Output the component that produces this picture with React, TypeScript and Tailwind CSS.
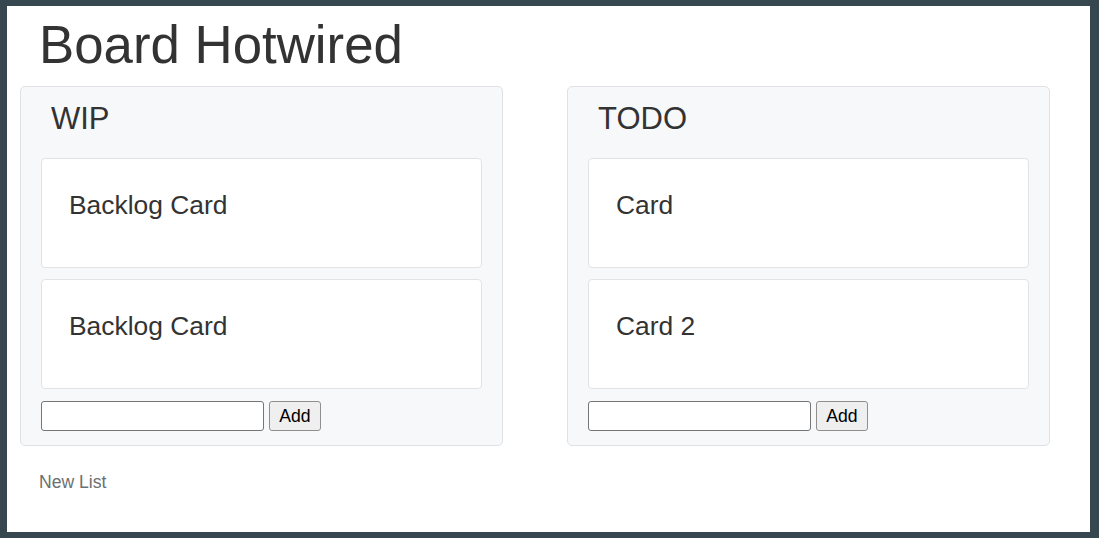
import React from "react";

type List = { title: string; cards: string[] };

const lists: List[] = [
  { title: "WIP", cards: ["Backlog Card", "Backlog Card"] },
  { title: "TODO", cards: ["Card", "Card 2"] },
];

function Panel({ list }: { list: List }) {
  return (
    <div className="w-[483px] rounded-[5px] border border-[#dfe1e4] bg-[#f7f8f9] px-[20px] pt-[13px] pb-[14px]">
      <h3 className="pl-[10px] text-[31px] leading-[37px] text-[#333]">{list.title}</h3>
      <div className="mt-[21px] flex flex-col gap-[11px]">
        {list.cards.map((c, i) => (
          <div
            key={i}
            className="h-[110px] rounded-[4px] border border-[#e2e3e5] bg-white pl-[27px] pt-[30px]"
          >
            <div className="text-[26.4px] leading-[32px] text-[#333]">{c}</div>
          </div>
        ))}
      </div>
      <div className="mt-[12px] flex items-center gap-[5px]">
        <input
          type="text"
          className="h-[30px] w-[223px] rounded-[3px] border border-[#767676] bg-white px-[3px] outline-none"
        />
        <button className="flex h-[30px] w-[52px] items-center justify-center rounded-[3px] border border-[#8f8f8f] bg-[#efefef] text-[17.6px] text-black">
          Add
        </button>
      </div>
    </div>
  );
}

export default function App() {
  return (
    <div
      className="h-[538px] w-full bg-[#36474f] pt-[6px] pl-[7px] pr-[9px] pb-[6px]"
      style={{ fontFamily: '"Liberation Sans", Arial, sans-serif' }}
    >
      <div className="h-full w-full bg-white">
        <h1 className="pt-[7px] pl-[32px] text-[52.8px] leading-[63px] text-[#333]">
          Board Hotwired
        </h1>
        <div className="mt-[10px] flex gap-[64px] pl-[13px]">
          {lists.map((l) => (
            <Panel key={l.title} list={l} />
          ))}
        </div>
        <div className="mt-[23px] pl-[32px]">
          <a className="text-[17.6px] leading-[26px] text-[#6c6f73]">New List</a>
        </div>
      </div>
    </div>
  );
}
